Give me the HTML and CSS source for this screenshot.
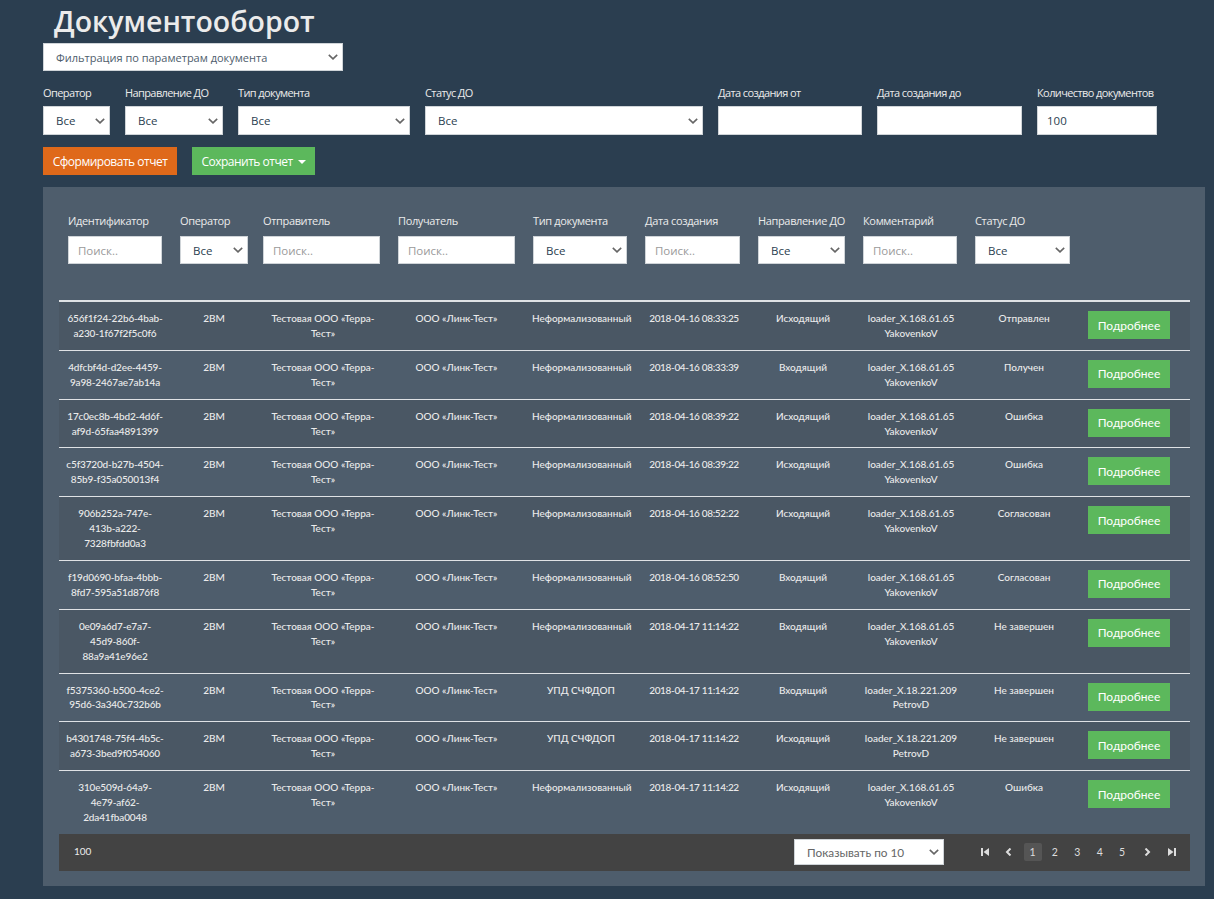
FILE: index.html
```html
<!DOCTYPE html>
<html lang="en">
<head>
    <meta charset="UTF-8">
    <meta name="viewport" content="width=device-width, initial-scale=1.0">
    <title>Документооборот</title>
    <link rel="stylesheet" href="styles.css">
</head>
<body>
    <div class="page">
        <h1 class="title">Документооборот</h1>
        <select class="filter-mode">
            <option>Фильтрация по параметрам документа</option>
        </select>

        <!-- Top filters -->
        <div class="top-filters">
            <div class="field f-oper"><label>Оператор</label><select><option>Все</option></select></div>
            <div class="field f-dir"><label>Направление ДО</label><select><option>Все</option></select></div>
            <div class="field f-type"><label>Тип документа</label><select><option>Все</option></select></div>
            <div class="field f-status"><label>Статус ДО</label><select><option>Все</option></select></div>
            <div class="field f-from"><label>Дата создания от</label><input type="text"></div>
            <div class="field f-to"><label>Дата создания до</label><input type="text"></div>
            <div class="field f-count"><label>Количество документов</label><input type="text" value="100"></div>
        </div>

        <div class="actions">
            <button class="btn btn-orange">Сформировать отчет</button>
            <button class="btn btn-green">Сохранить отчет<span class="caret"></span></button>
        </div>

        <div class="panel">
            <!-- Column filters -->
            <div class="col-filters">
                <div class="cf w94"><label>Идентификатор</label><input type="text" placeholder="Поиск.."></div>
                <div class="cf w68 tight"><label>Оператор</label><select><option>Все</option></select></div>
                <div class="cf w117"><label>Отправитель</label><input type="text" placeholder="Поиск.."></div>
                <div class="cf w117"><label>Получатель</label><input type="text" placeholder="Поиск.."></div>
                <div class="cf w94"><label>Тип документа</label><select><option>Все</option></select></div>
                <div class="cf w95"><label>Дата создания</label><input type="text" placeholder="Поиск.."></div>
                <div class="cf w87"><label>Направление ДО</label><select><option>Все</option></select></div>
                <div class="cf w94"><label>Комментарий</label><input type="text" placeholder="Поиск.."></div>
                <div class="cf w95"><label>Статус ДО</label><select><option>Все</option></select></div>
            </div>

            <table class="docs">
                <colgroup>
                    <col class="c-id"><col class="c-op"><col class="c-from"><col class="c-to"><col class="c-type">
                    <col class="c-date"><col class="c-dir"><col class="c-com"><col class="c-st"><col class="c-btn">
                </colgroup>
                <tbody>
                    <tr><td>656f1f24-22b6-4bab-<br>a230-1f67f2f5c0f6</td><td>2BM</td><td>Тестовая ООО «Терра-Тест»</td><td>ООО «Линк-Тест»</td><td>Неформализованный</td><td>2018-04-16 08:33:25</td><td>Исходящий</td><td>loader_X.168.61.65 YakovenkoV</td><td>Отправлен</td><td><button class="more">Подробнее</button></td></tr>
                    <tr><td>4dfcbf4d-d2ee-4459-<br>9a98-2467ae7ab14a</td><td>2BM</td><td>Тестовая ООО «Терра-Тест»</td><td>ООО «Линк-Тест»</td><td>Неформализованный</td><td>2018-04-16 08:33:39</td><td>Входящий</td><td>loader_X.168.61.65 YakovenkoV</td><td>Получен</td><td><button class="more">Подробнее</button></td></tr>
                    <tr><td>17c0ec8b-4bd2-4d6f-<br>af9d-65faa4891399</td><td>2BM</td><td>Тестовая ООО «Терра-Тест»</td><td>ООО «Линк-Тест»</td><td>Неформализованный</td><td>2018-04-16 08:39:22</td><td>Исходящий</td><td>loader_X.168.61.65 YakovenkoV</td><td>Ошибка</td><td><button class="more">Подробнее</button></td></tr>
                    <tr><td>c5f3720d-b27b-4504-<br>85b9-f35a050013f4</td><td>2BM</td><td>Тестовая ООО «Терра-Тест»</td><td>ООО «Линк-Тест»</td><td>Неформализованный</td><td>2018-04-16 08:39:22</td><td>Исходящий</td><td>loader_X.168.61.65 YakovenkoV</td><td>Ошибка</td><td><button class="more">Подробнее</button></td></tr>
                    <tr><td>906b252a-747e-<br>413b-a222-<br>7328fbfdd0a3</td><td>2BM</td><td>Тестовая ООО «Терра-Тест»</td><td>ООО «Линк-Тест»</td><td>Неформализованный</td><td>2018-04-16 08:52:22</td><td>Исходящий</td><td>loader_X.168.61.65 YakovenkoV</td><td>Согласован</td><td><button class="more">Подробнее</button></td></tr>
                    <tr><td>f19d0690-bfaa-4bbb-<br>8fd7-595a51d876f8</td><td>2BM</td><td>Тестовая ООО «Терра-Тест»</td><td>ООО «Линк-Тест»</td><td>Неформализованный</td><td>2018-04-16 08:52:50</td><td>Входящий</td><td>loader_X.168.61.65 YakovenkoV</td><td>Согласован</td><td><button class="more">Подробнее</button></td></tr>
                    <tr><td>0e09a6d7-e7a7-<br>45d9-860f-<br>88a9a41e96e2</td><td>2BM</td><td>Тестовая ООО «Терра-Тест»</td><td>ООО «Линк-Тест»</td><td>Неформализованный</td><td>2018-04-17 11:14:22</td><td>Входящий</td><td>loader_X.168.61.65 YakovenkoV</td><td>Не завершен</td><td><button class="more">Подробнее</button></td></tr>
                    <tr><td>f5375360-b500-4ce2-<br>95d6-3a340c732b6b</td><td>2BM</td><td>Тестовая ООО «Терра-Тест»</td><td>ООО «Линк-Тест»</td><td>УПД СЧФДОП</td><td>2018-04-17 11:14:22</td><td>Входящий</td><td>loader_X.18.221.209 PetrovD</td><td>Не завершен</td><td><button class="more">Подробнее</button></td></tr>
                    <tr><td>b4301748-75f4-4b5c-<br>a673-3bed9f054060</td><td>2BM</td><td>Тестовая ООО «Терра-Тест»</td><td>ООО «Линк-Тест»</td><td>УПД СЧФДОП</td><td>2018-04-17 11:14:22</td><td>Исходящий</td><td>loader_X.18.221.209 PetrovD</td><td>Не завершен</td><td><button class="more">Подробнее</button></td></tr>
                    <tr><td>310e509d-64a9-<br>4e79-af62-<br>2da41fba0048</td><td>2BM</td><td>Тестовая ООО «Терра-Тест»</td><td>ООО «Линк-Тест»</td><td>Неформализованный</td><td>2018-04-17 11:14:22</td><td>Исходящий</td><td>loader_X.168.61.65 YakovenkoV</td><td>Ошибка</td><td><button class="more">Подробнее</button></td></tr>
                </tbody>
            </table>

            <div class="pager-bar">
                <span class="total">100</span>
                <select class="per-page"><option>Показывать по 10</option></select>
                <div class="pager">
                    <span class="pg ic"><svg width="10" height="8" viewBox="0 0 10 8"><path d="M1 0h2v8H1zM9 0v8L3.5 4z" fill="#ddd"/></svg></span>
                    <span class="pg ic"><svg width="8" height="8" viewBox="0 0 8 8"><path d="M5.5 .5L2 4l3.5 3.5" fill="none" stroke="#ddd" stroke-width="2"/></svg></span>
                    <span class="pg num active">1</span>
                    <span class="pg num">2</span>
                    <span class="pg num">3</span>
                    <span class="pg num">4</span>
                    <span class="pg num">5</span>
                    <span class="pg ic next"><svg width="8" height="8" viewBox="0 0 8 8"><path d="M2.5 .5L6 4 2.5 7.5" fill="none" stroke="#ddd" stroke-width="2"/></svg></span>
                    <span class="pg ic"><svg width="10" height="8" viewBox="0 0 10 8"><path d="M7 0h2v8H7zM1 0v8l5.5-4z" fill="#ddd"/></svg></span>
                </div>
            </div>
        </div>
    </div>
</body>
</html>
```

FILE: styles.css
```css
body {
    margin: 0;
    background-color: #2b3e50;
    color: #ebebeb;
    font-family: 'Open Sans', sans-serif;
}
.page {
    width: 1162px;
    margin-left: 43px;
    padding-bottom: 13px;
}
.title {
    margin: 0;
    padding-left: 11px;
    height: 43px;
    font-size: 28.5px;
    line-height: 43px;
    font-weight: 600;
    color: #ebebeb;
}
select, input {
    box-sizing: border-box;
    display: block;
    background-color: #fff;
    border: 1px solid #cfd4d8;
    border-radius: 0;
    color: #2b3e50;
    font-family: 'Open Sans', sans-serif;
    font-size: 11.5px;
    outline: none;
}
select {
    appearance: none;
    padding-left: 12px;
    background-image: url("data:image/svg+xml,%3Csvg xmlns='http://www.w3.org/2000/svg' width='10' height='6' viewBox='0 0 10 6'%3E%3Cpath d='M.8 .8L5 4.8 9.2 .8' fill='none' stroke='%23666' stroke-width='1.6'/%3E%3C/svg%3E");
    background-repeat: no-repeat;
    background-position: right 4px center;
}
input {
    padding: 0 9px;
}
input::placeholder {
    color: #9a9a9a;
}
label {
    display: block;
    white-space: nowrap;
    font-size: 11px;
}
.filter-mode {
    width: 300px;
    height: 28px;
    font-size: 11px;
    color: #4e5d6c;
}
.top-filters {
    display: flex;
    gap: 15px;
    margin-top: 14px;
}
.field label {
    height: 21px;
    line-height: 15px;
    letter-spacing: -0.6px;
}
.field select, .field input {
    width: 100%;
    height: 29px;
}
.f-oper { width: 67px; }
.f-dir { width: 98px; }
.f-type { width: 172px; }
.f-status { width: 278px; }
.f-from { width: 144px; }
.f-to { width: 145px; }
.f-count { width: 120px; }
.actions {
    display: flex;
    gap: 15px;
    margin-top: 12px;
}
.btn {
    height: 28px;
    padding: 0;
    border: none;
    color: #fff;
    font-family: 'Open Sans', sans-serif;
    font-size: 12px;
    letter-spacing: -0.5px;
}
.btn-orange {
    width: 134px;
    background-color: #df691a;
}
.btn-green {
    width: 123px;
    background-color: #5cb85c;
}
.caret {
    display: inline-block;
    margin-left: 5px;
    vertical-align: 2px;
    border-top: 4px solid #fff;
    border-left: 4px solid transparent;
    border-right: 4px solid transparent;
}
.panel {
    margin-top: 12px;
    height: 699px;
    box-sizing: border-box;
    background-color: #4e5d6c;
    padding: 27px 15px 0 16px;
}
.col-filters {
    display: flex;
    gap: 18px;
    padding-left: 9px;
    height: 86px;
}
.cf label {
    height: 22px;
    line-height: 14px;
    letter-spacing: -0.35px;
}
.cf select, .cf input {
    width: 100%;
    height: 28px;
}
.tight { margin-right: -3px; }
.w68 { width: 68px; }
.w87 { width: 87px; }
.w94 { width: 94px; }
.w95 { width: 95px; }
.w117 { width: 117px; }
.docs {
    width: 1131px;
    table-layout: fixed;
    border-collapse: collapse;
    border-top: 2px solid #dfe2e5;
    font-family: 'Lato', sans-serif;
    font-size: 10px;
    font-weight: 500;
    line-height: 14.9px;
    color: #ebebeb;
}
.c-id { width: 112px; }
.c-op { width: 86px; }
.c-from { width: 132px; }
.c-to { width: 135px; }
.c-type { width: 114px; }
.c-date { width: 112px; }
.c-dir { width: 106px; }
.c-com { width: 110px; }
.c-st { width: 116px; }
.c-btn { width: 108px; }
.docs td {
    padding: 9px 8px;
    text-align: center;
    vertical-align: top;
    border-top: 1px solid #dfe2e5;
}
.docs td:first-child {
    padding: 9px 0;
    white-space: nowrap;
    letter-spacing: -0.15px;
}
.docs td:nth-child(6) {
    padding: 9px 0;
    white-space: nowrap;
    letter-spacing: -0.35px;
}
.docs tr:first-child td {
    border-top: none;
}
.docs tr:nth-child(odd) {
    background-color: #4a5764;
}
.docs td:last-child {
    padding: 9px 0 0 6px;
    text-align: left;
}
.more {
    display: block;
    width: 82px;
    height: 28px;
    padding: 0;
    border: none;
    background-color: #5cb85c;
    color: #fff;
    font-family: 'Lato', sans-serif;
    font-size: 12px;
}
.pager-bar {
    display: flex;
    align-items: center;
    width: 1131px;
    height: 37px;
    background-color: #434343;
    font-family: 'Lato', sans-serif;
    font-size: 10px;
}
.total {
    margin-left: 15px;
    width: 720px;
    position: relative;
    top: -1px;
}
.per-page {
    width: 150px;
    height: 26px;
    font-family: 'Lato', sans-serif;
    font-size: 11.8px;
    color: #666;
}
.pager {
    display: flex;
    align-items: center;
    margin-left: 31.5px;
}
.pg {
    display: flex;
    align-items: center;
    justify-content: center;
    width: 18px;
    height: 18px;
    margin-right: 4.4px;
    border-radius: 2px;
    color: #ddd;
    font-size: 10.5px;
}
.pg.ic { margin-right: 6px; }
.pg.next {
    margin-left: 2.5px;
    margin-right: 7px;
}
.pg.active {
    background-color: #555;
}
```
